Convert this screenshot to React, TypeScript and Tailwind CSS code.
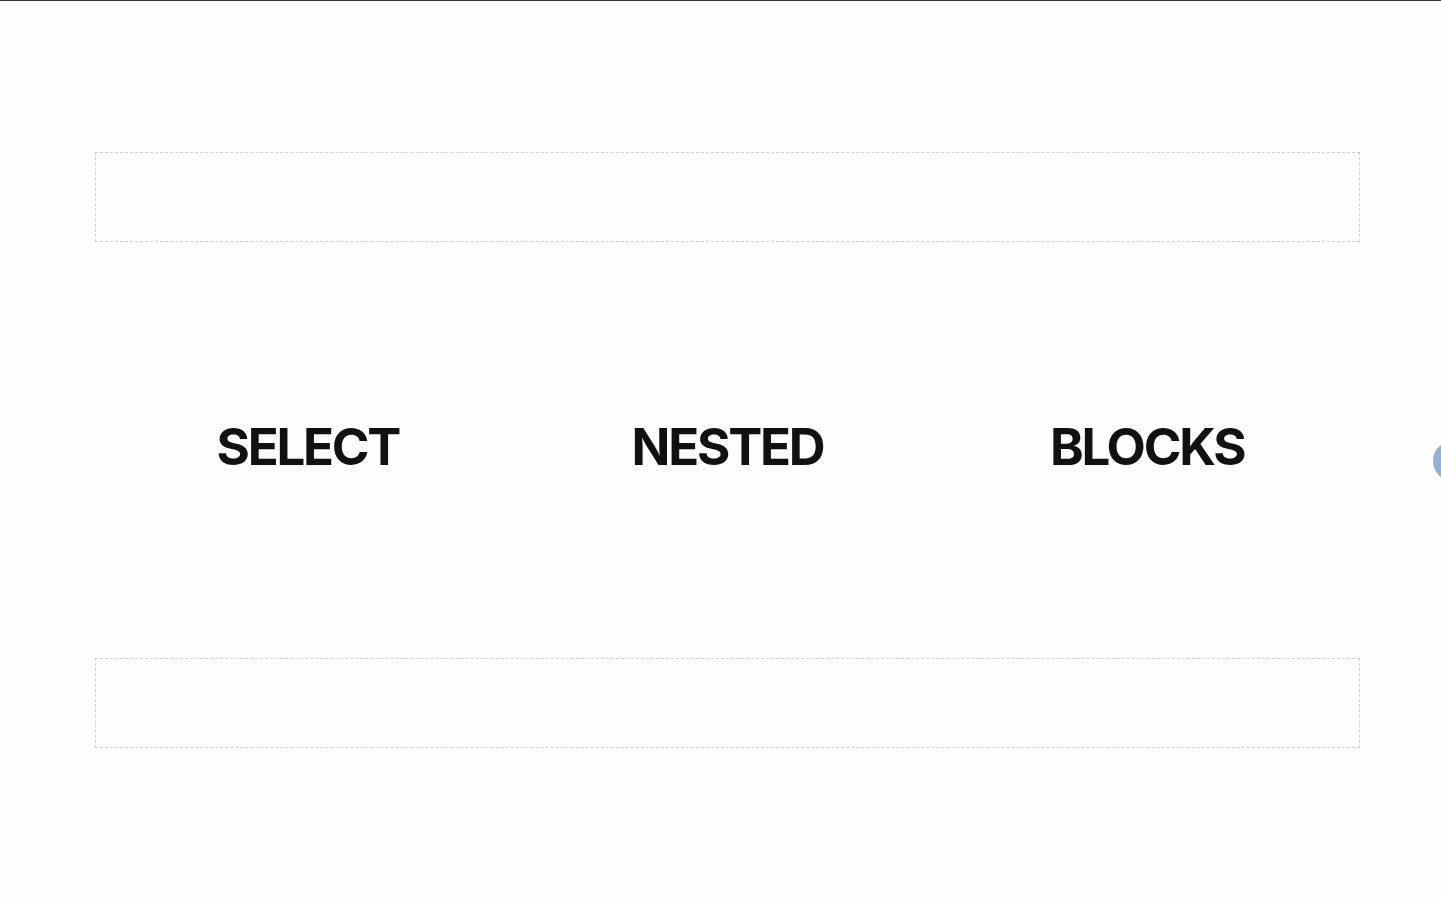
export default function App() {
  return (
    <div className="relative min-h-[897px] w-full overflow-hidden bg-[#fdfdfb] border-t border-[#333]" style={{ fontFamily: 'Inter, "Liberation Sans", sans-serif' }}>
      <div className="ml-[95px] w-[1265px] pt-[151px]">
        <div className="h-[90px] border border-dashed border-[#cfcfcf]" />
        <div className="grid h-[416px] grid-cols-3 items-center px-[3px] pb-[8px]">
          <div className="text-center text-[51px] font-bold leading-none tracking-[-2.2px] text-[#111]">SELECT</div>
          <div className="text-center text-[51px] font-bold leading-none tracking-[-2.2px] text-[#111]">NESTED</div>
          <div className="text-center text-[51px] font-bold leading-none tracking-[-2.2px] text-[#111]">BLOCKS</div>
        </div>
        <div className="h-[90px] border border-dashed border-[#cfcfcf]" />
      </div>
      <div className="absolute left-[1433px] top-[440px] h-[40px] w-[40px] rounded-full bg-[#8db3d6]" />
    </div>
  );
}
